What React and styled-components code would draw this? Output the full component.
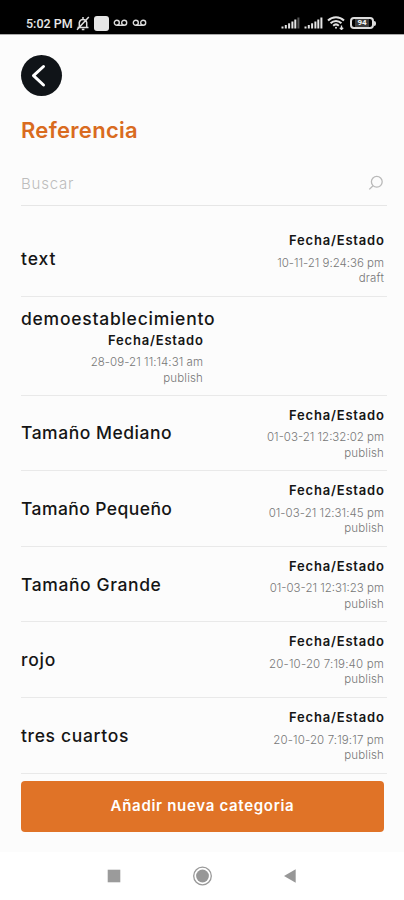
import React from "react";
import styled, { createGlobalStyle } from "styled-components";

const categories = [
  { name: "text", date: "10-11-21 9:24:36 pm", status: "draft", track: 0.9, dateTrack: -0.02 },
  { name: "demoestablecimiento", date: "28-09-21 11:14:31 am", status: "publish", stacked: true, track: 0.75, dateTrack: 0.05 },
  { name: "Tamaño Mediano", date: "01-03-21 12:32:02 pm", status: "publish" },
  { name: "Tamaño Pequeño", date: "01-03-21 12:31:45 pm", status: "publish", track: 0.42, dateTrack: 0.05 },
  { name: "Tamaño Grande", date: "01-03-21 12:31:23 pm", status: "publish", track: 0.6 },
  { name: "rojo", date: "20-10-20 7:19:40 pm", status: "publish", track: 0.8, dateTrack: 0.17 },
  { name: "tres cuartos", date: "20-10-20 7:19:17 pm", status: "publish", track: 0.65, dateTrack: 0.12 },
];

const Signal = ({ weak }) => (
  <svg width="19" height="12" viewBox="0 0 19 12" fill="#e4e4e4">
    <rect x="0.5" y="9.5" width="2" height="2" />
    <rect x="3.8" y="8" width="2" height="3.5" />
    <rect x="7.1" y="6.3" width="2" height="5.2" />
    <rect x="10.4" y="4.5" width="2" height="7" />
    <rect x="13.3" y="2.5" width="2" height="9" />
    <rect x="16.4" y="0.5" width="2" height="11" fill={weak ? "#555" : "#e4e4e4"} />
  </svg>
);

const Voicemail = () => (
  <svg width="15" height="9" viewBox="0 0 15 9" fill="none" stroke="#dcdcdc" strokeWidth="1.4">
    <circle cx="3.8" cy="3.8" r="2.5" />
    <circle cx="11.2" cy="3.8" r="2.5" />
    <path d="M3.8 6.3h7.4" />
  </svg>
);

export default function App() {
  return (
    <>
      <GlobalStyle />
      <Screen>
        <StatusBar>
          <StatusGroup>
            <Clock>5:02 PM</Clock>
            <svg width="14" height="15" viewBox="0 0 14 15" fill="none" stroke="#dedede" strokeWidth="1.5">
              <path d="M1.5 11.5h11M3.3 11V6.5a3.8 3.8 0 0 1 7.4 0V11M7 2.7V1M5.8 13.6h2.6M1 13.8 12.8 1" />
            </svg>
            <AppSquare />
            <Voicemail />
            <Voicemail />
          </StatusGroup>
          <StatusGroup $right>
            <Signal weak />
            <Signal />
            <svg width="18" height="14" viewBox="0 0 18 14" fill="none" stroke="#e2e2e2" strokeWidth="2">
              <path d="M1 4.5C5.5 0 12.5 0 17 4.5M3.6 7.2c3-3 7.8-3 10.8 0M6.2 9.7c1.600-1.500 4-1.500 5.600 0" />
              <circle cx="9" cy="11.8" r="1" fill="#e2e2e2" stroke="none" />
              <path d="M14.5 9.5v4M12.8 11.8l1.7 1.7 1.7-1.7" strokeWidth="1.3" />
            </svg>
            <Battery>
              <BatteryLevel>94</BatteryLevel>
            </Battery>
          </StatusGroup>
        </StatusBar>

        <Content>
          <BackButton aria-label="Volver">
            <svg width="41" height="41" viewBox="0 0 41 41" fill="none" stroke="#fff" strokeWidth="3" strokeLinecap="round" strokeLinejoin="round">
              <path d="M22.5 11.5 12.5 20.7l10 9.3" />
            </svg>
          </BackButton>
          <Title>Referencia</Title>
          <SearchBar>
            <span>Buscar</span>
            <svg width="16" height="16" viewBox="0 0 16 16" fill="none" stroke="#b9b9b9" strokeWidth="1.3">
              <circle cx="8.8" cy="6.8" r="5.4" />
              <path d="M5 10.7 1.3 14.4" />
            </svg>
          </SearchBar>

          <List>
            {categories.map((item) => (
              <Row key={item.name} $stacked={item.stacked}>
                <Name $track={item.track}>{item.name}</Name>
                <Meta $stacked={item.stacked}>
                  <MetaLabel>Fecha/Estado</MetaLabel>
                  <MetaText $track={item.dateTrack}>{item.date}</MetaText>
                  <MetaText $track={0.15}>{item.status}</MetaText>
                </Meta>
              </Row>
            ))}
          </List>
          <AddButton>Añadir nueva categoria</AddButton>
        </Content>

        <NavBar>
          <svg width="14" height="14" viewBox="0 0 14 14">
            <rect x="0.7" y="0.7" width="12.6" height="12.6" fill="#9b9b9b" />
          </svg>
          <svg width="20" height="20" viewBox="0 0 20 20">
            <circle cx="10.5" cy="10" r="8.8" fill="none" stroke="#999" strokeWidth="1.3" />
            <circle cx="10.5" cy="10" r="6.4" fill="#979797" />
          </svg>
          <svg width="14" height="16" viewBox="0 0 14 16">
            <path d="M1 8 12.7 1.2v13.6z" fill="#979797" />
          </svg>
        </NavBar>
      </Screen>
    </>
  );
}

const GlobalStyle = createGlobalStyle`
  * {
    box-sizing: border-box;
  }
  body {
    margin: 0;
    font-family: Inter, "Liberation Sans", sans-serif;
  }
`;
const Screen = styled.div`
  display: flex;
  flex-direction: column;
  width: 404px;
  height: 900px;
  overflow: hidden;
  background: #fcfcfc;
`;
const StatusBar = styled.header`
  display: flex;
  flex: none;
  justify-content: space-between;
  height: 34px;
  padding: 12px 26px 0;
  background: #000;
  box-shadow: 0 1px 0 #aaa;
`;
const StatusGroup = styled.div`
  display: flex;
  align-items: center;
  gap: 4px;
  height: 22px;
  ${(props) => props.$right && "svg:nth-child(3) { margin-right: 1px; }"}
`;
const Clock = styled.span`
  width: 46px;
  color: #e8e8e8;
  font: 500 12.5px Roboto, sans-serif;
  white-space: nowrap;
`;
const AppSquare = styled.span`
  width: 15px;
  height: 15px;
  border-radius: 3px;
  background: #e6e6e6;
`;
const Battery = styled.div`
  position: relative;
  display: flex;
  align-items: center;
  justify-content: center;
  width: 24px;
  height: 12px;
  margin-right: 4px;
  border: 2px solid #dcdcdc;
  border-radius: 4px;
  &::after {
    content: "";
    position: absolute;
    right: -4px;
    width: 2px;
    height: 5px;
    border-radius: 0 2px 2px 0;
    background: #dcdcdc;
  }
`;
const BatteryLevel = styled.span`
  padding: 0 2px;
  background: #3c3c3c;
  color: #f2f2f2;
  font: 700 8px/8px Roboto, sans-serif;
`;
const Content = styled.main`
  display: flex;
  flex: none;
  flex-direction: column;
  height: 818px;
  padding: 21px 17px 0 21px;
`;
const BackButton = styled.button`
  width: 41px;
  height: 41px;
  padding: 0;
  border: 0;
  border-radius: 50%;
  background: #101418;
  svg {
    display: block;
  }
`;
const Title = styled.h1`
  margin: 20px 0 1px;
  color: #d96b20;
  font-size: 22px;
  font-weight: 600;
  line-height: 28px;
  letter-spacing: 0.3px;
`;
const SearchBar = styled.div`
  display: flex;
  align-items: center;
  justify-content: space-between;
  height: 61px;
  padding: 16px 3px 0 0;
  border-bottom: 1px solid #e6e6e6;
  color: #bdbdbd;
  font-size: 15px;
  font-weight: 300;
  letter-spacing: 0.8px;
  svg {
    margin-top: -1px;
  }
`;
const List = styled.div`
  padding-top: 15px;
`;
const Row = styled.div`
  display: flex;
  flex-direction: ${(props) => (props.$stacked ? "column" : "row")};
  align-items: ${(props) => (props.$stacked ? "flex-start" : "center")};
  justify-content: ${(props) => (props.$stacked ? "flex-start" : "space-between")};
  height: ${(props) => (props.$stacked ? "99px" : "75.6px")};
  padding: ${(props) => (props.$stacked ? "10px 3px 0 0" : "1px 3px 0 0")};
  border-bottom: 1px solid #e9e9e9;
`;
const Name = styled.span`
  color: #151515;
  font-size: 17.5px;
  font-weight: 500;
  line-height: 24px;
  letter-spacing: ${(props) => props.$track ?? 0.52}px;
`;
const Meta = styled.div`
  display: flex;
  flex-direction: column;
  align-items: flex-end;
  padding-top: 1px;
  ${(props) => props.$stacked && "width: 182px;"}
`;
const MetaLabel = styled.span`
  margin: 0 -0.7px 6.5px 0;
  color: #151515;
  font-size: 13px;
  font-weight: 600;
  line-height: 17px;
  letter-spacing: 0.8px;
`;
const MetaText = styled.span`
  color: #777;
  font-size: 11.5px;
  font-weight: 300;
  line-height: 15.5px;
  letter-spacing: ${(props) => props.$track ?? 0}px;
`;
const AddButton = styled.button`
  width: 363px;
  height: 51px;
  margin-top: 7px;
  padding: 0 0 1px;
  border: 0;
  border-radius: 4px;
  background: #e07327;
  color: #fff;
  font: 600 15px Inter, sans-serif;
  letter-spacing: 0.7px;
`;
const NavBar = styled.nav`
  display: flex;
  flex: 1;
  align-items: center;
  justify-content: space-between;
  padding: 0 107px;
  background: #fff;
`;
